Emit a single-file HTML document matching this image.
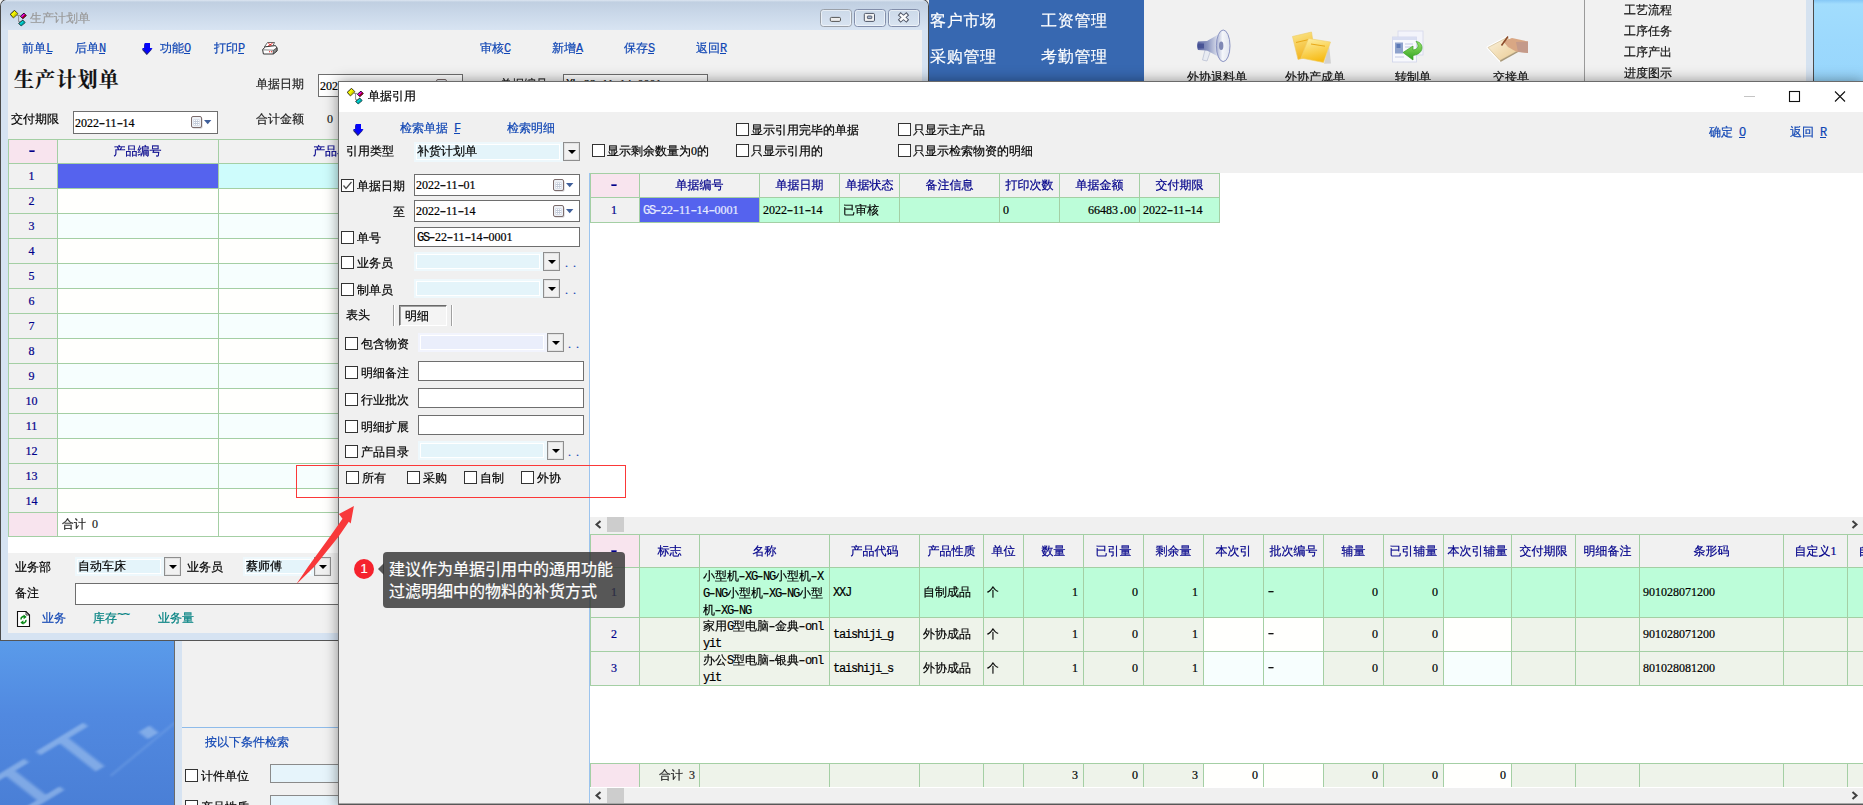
<!DOCTYPE html>
<html lang="zh-CN"><head><meta charset="utf-8"><title>单据引用</title>
<style>
html,body{margin:0;padding:0}
body{width:1863px;height:805px;overflow:hidden;position:relative;background:#f0f0f0;font-family:'Liberation Serif','WenQuanYi Zen Hei','Noto Sans CJK SC',sans-serif;font-size:12px;color:#000}
div,svg.a,i{position:absolute;box-sizing:content-box}
.t{white-space:nowrap;-webkit-text-stroke:0.2px}
.dash{font-weight:bold}
.m{font-family:'Liberation Mono',monospace;letter-spacing:-1.2px}
.d{font-family:'Liberation Serif',serif}
.h{display:inline-block;width:6px;font-family:'Liberation Mono',monospace;transform:scaleX(1.45);text-indent:-0.6px}
.cb{width:11px;height:11px;border:1px solid #333;background:#fff}
.dd{border:1px solid #8e8e8e;background:#f1f1f1;box-shadow:inset 0 0 0 1px #e2e2e2}
.dd i{width:0;height:0;border-left:4px solid transparent;border-right:4px solid transparent;border-top:4px solid #000}
u{text-decoration:underline}
.g{background:#a4cfa4}
</style></head><body>
<div style="left:929px;top:0px;width:215px;height:82px;background:#3768b1"></div>
<div class="t" style="left:930px;top:11px;line-height:20px;height:20px;font-size:16px;color:#fff;letter-spacing:0.7px;">客户市场</div>
<div class="t" style="left:1041px;top:11px;line-height:20px;height:20px;font-size:16px;color:#fff;letter-spacing:0.7px;">工资管理</div>
<div class="t" style="left:930px;top:47px;line-height:20px;height:20px;font-size:16px;color:#fff;letter-spacing:0.7px;">采购管理</div>
<div class="t" style="left:1041px;top:47px;line-height:20px;height:20px;font-size:16px;color:#fff;letter-spacing:0.7px;">考勤管理</div>
<div style="left:1144px;top:0px;width:440px;height:82px;background:#f1f1f1"></div>
<svg class="a" style="left:1190px;top:26px" width="350" height="40" viewBox="1190 26 350 40">
<defs>
<linearGradient id="gh" x1="0" x2="1"><stop offset="0" stop-color="#aab2d2"/><stop offset=".45" stop-color="#f4f6fa"/><stop offset="1" stop-color="#dfe3ee"/></linearGradient>
<linearGradient id="gb" x1="0" x2="1"><stop offset="0" stop-color="#5a64a2"/><stop offset=".5" stop-color="#8e98c2"/><stop offset="1" stop-color="#e6e9f2"/></linearGradient>
<linearGradient id="gy" x1="0" y1="0" x2="0.3" y2="1"><stop offset="0" stop-color="#fdf2ac"/><stop offset="1" stop-color="#f7bc18"/></linearGradient>
<linearGradient id="gy2" x1="0" y1="0" x2="0.3" y2="1"><stop offset="0" stop-color="#fbe88e"/><stop offset="1" stop-color="#f3b420"/></linearGradient>
<linearGradient id="gp" x1="0" y1="0" x2="1" y2="1"><stop offset="0" stop-color="#fbf3de"/><stop offset="1" stop-color="#e9c88e"/></linearGradient>
<linearGradient id="gg" x1="0" y1="0" x2="0" y2="1"><stop offset="0" stop-color="#9be36c"/><stop offset="1" stop-color="#2fa21e"/></linearGradient>
</defs>
<!-- megaphone -->
<path d="M1205 50 L1202.5 60 L1207 61 L1210.5 51 Z" fill="#e8ebf2" stroke="#b4bbd0" stroke-width=".7"/>
<path d="M1198 41.5 L1207 41 L1219 34 L1219 57 L1207 50.5 L1198 50 Q1196 46 1198 41.5Z" fill="url(#gb)"/>
<rect x="1198" y="43.5" width="6" height="5" fill="#3e4a8e" opacity=".8"/>
<ellipse cx="1223.2" cy="45.8" rx="6.8" ry="15.8" fill="url(#gh)" stroke="#8a93c2" stroke-width="1"/>
<ellipse cx="1221.2" cy="45.8" rx="2.2" ry="4.2" fill="#7f88b4"/>
<!-- sticky notes -->
<path d="M1292.5 36.5 L1311.5 32 L1315 55 L1298 59.5 Z" fill="url(#gy2)" stroke="#eecb62" stroke-width=".6"/>
<path d="M1296 42.5 L1309 39.5" stroke="#e8a818" stroke-width="1"/>
<path d="M1331 63.5 L1324 63.8 L1329 45 Z" fill="#b8b8b8" opacity=".55"/>
<path d="M1308.5 38.5 L1330.5 42 L1323.5 62.5 L1301 58 Z" fill="url(#gy)" stroke="#f0cf6a" stroke-width=".6"/>
<path d="M1311 44 L1325 46.2" stroke="#e8a818" stroke-width="1"/>
<!-- windows + green arrow -->
<rect x="1398" y="31" width="25" height="24" fill="#f3f4fb" stroke="#d4d8ec" stroke-width=".8"/>
<rect x="1392.5" y="37" width="24" height="25" fill="#f8f9fd" stroke="#cfd4ea" stroke-width=".8"/>
<rect x="1392.5" y="37" width="24" height="3" fill="#d9def2"/>
<rect x="1395" y="42.5" width="8" height="11" fill="#8ea2cc"/>
<rect x="1396.5" y="44" width="4" height="4" fill="#5a78b6"/>
<path d="M1405 44h8M1405 47h7M1395 57h9" stroke="#c2c9e4" stroke-width="1"/>
<path d="M1416 41.5 C1424 42 1425 54 1413 55.5 L1413 60 L1403 52.5 L1413 46 L1413 50 C1419 49.5 1419 44.5 1416 41.5 Z" fill="url(#gg)" stroke="#3aa026" stroke-width=".7"/>
<!-- paper + hand -->
<path d="M1488 47.5 L1507 37.5 L1521 49 L1500 60.5 Z" fill="#fff" stroke="#fff" stroke-width="3" stroke-linejoin="round"/>
<path d="M1488 47.5 L1507 37.5 L1521 49 L1500 60.5 Z" fill="url(#gp)" stroke="#c9b488" stroke-width=".6"/>
<path d="M1500 60.5 L1521 49 L1521 50.5 L1500.5 62 Z" fill="#a89878"/>
<path d="M1503 41 L1512 38 L1528 41.5 L1528 53 L1516 51.5 L1508 47 Z" fill="#d9a784"/>
<path d="M1516 42 L1528 41.5 L1528 53 L1518 52 Z" fill="#c49a8a"/>
<path d="M1508 36.5 L1501.5 45.5" stroke="#8a4a2a" stroke-width="1.6"/>
</svg>
<div class="t" style="left:1167px;top:69px;line-height:16px;height:16px;font-size:12px;color:#111;width:100px;text-align:center;">外协退料单</div>
<div class="t" style="left:1265px;top:69px;line-height:16px;height:16px;font-size:12px;color:#111;width:100px;text-align:center;">外协产成单</div>
<div class="t" style="left:1363px;top:69px;line-height:16px;height:16px;font-size:12px;color:#111;width:100px;text-align:center;">转制单</div>
<div class="t" style="left:1461px;top:69px;line-height:16px;height:16px;font-size:12px;color:#111;width:100px;text-align:center;">交接单</div>
<div style="left:1584px;top:0px;width:1px;height:82px;background:#9a9a9a"></div>
<div style="left:1585px;top:0px;width:221px;height:82px;background:#f1f1f1"></div>
<div class="t" style="left:1624px;top:2px;line-height:16px;height:16px;font-size:12px;color:#111;">工艺流程</div>
<div class="t" style="left:1624px;top:23px;line-height:16px;height:16px;font-size:12px;color:#111;">工序任务</div>
<div class="t" style="left:1624px;top:44px;line-height:16px;height:16px;font-size:12px;color:#111;">工序产出</div>
<div class="t" style="left:1624px;top:65px;line-height:16px;height:16px;font-size:12px;color:#111;">进度图示</div>
<div style="left:1806px;top:0px;width:7px;height:82px;background:#d5e2f0"></div>
<div style="left:1813px;top:0px;width:50px;height:82px;background:linear-gradient(180deg,#86c8f6 0,#a2ddfd 5%,#9cd9fd 50%,#98d6fc 100%);border-left:1px solid #4c4c4c"></div>
<div style="left:0px;top:641px;width:174px;height:164px;background:linear-gradient(180deg,#5a9bea 0%,#5189e0 45%,#4a7fd6 100%);overflow:hidden"><div class="t" style="left:0;top:0;font:66px/1 'Liberation Mono',monospace;color:rgba(175,205,242,.52);transform:matrix(1.353,-0.824,0.925,0.725,-27.1,140.1);transform-origin:0 0;filter:blur(1.1px)">IT.</div><div style="left:110px;top:134px;width:84px;height:2px;background:rgba(150,190,240,.3);transform:rotate(-39.6deg);transform-origin:0 0;filter:blur(0.8px)"></div></div>
<div style="left:174px;top:641px;width:8px;height:164px;background:#d6e3f2;border-left:1px solid #6a6a6a;width:7px"></div>
<div style="left:182px;top:641px;width:157px;height:164px;background:#f1f1f1"></div>
<div style="left:182px;top:727px;width:157px;height:1px;background:#8ebbea"></div>
<div class="t" style="left:205px;top:734px;line-height:16px;height:16px;font-size:12px;color:#1046b4;">按以下条件检索</div>
<div class="cb" style="left:185px;top:769px"></div>
<div class="t" style="left:201px;top:768px;line-height:16px;height:16px;font-size:12px;color:#000;">计件单位</div>
<div style="left:270px;top:764px;width:80px;height:17px;background:#e6f4fb;border:1px solid #8a8a8a"></div>
<div class="cb" style="left:185px;top:800px"></div>
<div class="t" style="left:201px;top:799px;line-height:16px;height:16px;font-size:12px;color:#000;">产品性质</div>
<div style="left:270px;top:795px;width:80px;height:17px;background:#e6f4fb;border:1px solid #8a8a8a"></div>
<div style="left:0px;top:-1px;width:929px;height:642px;background:#d6e3f2;border-radius:7px 7px 0 0;box-shadow:inset 0 0 0 1px #4a4a4a"></div>
<div style="left:1px;top:0px;width:927px;height:30px;background:linear-gradient(180deg,#dde6f1 0,#c0cfe1 7%,#cbd9ea 50%,#d8e4f2 100%);border-radius:6px 6px 0 0"></div>
<svg class="a" style="left:10px;top:10px" width="17" height="17" viewBox="0 0 17 17">
<path d="M7 5.4H10.4M8.6 5.4V11.7H10.2" stroke="#8c8c8c" stroke-width="1" fill="none"/>
<path d="M4.5 0.3 L7.9 3.7 L3.4 7.9 L0.2 4.3 Z" fill="#f6f600" stroke="#111" stroke-width="0.9"/>
<path d="M6.2 2 L7.9 3.7 L3.4 7.9 L2.4 6.8 Z" fill="#b8b800" opacity=".55"/>
<path d="M14 3.1 L16.3 5.6 L12.8 8.7 L10.4 6.2 Z" fill="#f000f0" stroke="#111" stroke-width="0.9"/>
<path d="M15.1 4.3 L16.3 5.6 L12.8 8.7 L11.9 7.6 Z" fill="#90001c"/>
<path d="M12.8 10.1 L15.1 12.6 L11.2 15.9 L8.7 13.4 Z" fill="#00dcdc" stroke="#111" stroke-width="0.9"/>
<path d="M13.9 11.3 L15.1 12.6 L11.2 15.9 L10.2 14.9 Z" fill="#009a9a" opacity=".8"/></svg>
<div class="t" style="left:30px;top:10px;line-height:16px;height:16px;font-size:12px;color:#9a9a9a;">生产计划单</div>
<svg class="a" style="left:820px;top:9px" width="32" height="19" viewBox="0 0 32 19"><rect x="0.5" y="0.5" width="31" height="17" rx="3" fill="rgba(255,255,255,.10)" stroke="#9aa0a8"/><rect x="1.5" y="1.5" width="29" height="15" rx="2" fill="none" stroke="rgba(255,255,255,.55)"/><rect x="10.3" y="8.4" width="10.2" height="4" rx="1.2" fill="#ececec" stroke="#555" stroke-width="1"/></svg>
<svg class="a" style="left:854px;top:9px" width="32" height="19" viewBox="0 0 32 19"><rect x="0.5" y="0.5" width="31" height="17" rx="3" fill="rgba(255,255,255,.10)" stroke="#828eaa"/><rect x="1.5" y="1.5" width="29" height="15" rx="2" fill="none" stroke="rgba(255,255,255,.55)"/><rect x="10.3" y="4.4" width="10.2" height="8" rx="1.2" fill="#f4f4f4" stroke="#4e5566" stroke-width="1"/><rect x="13.4" y="7" width="4.4" height="2.6" rx=".6" fill="#a8b8d0" stroke="#4e5566" stroke-width=".9"/></svg>
<svg class="a" style="left:888px;top:9px" width="32" height="19" viewBox="0 0 32 19"><rect x="0.5" y="0.5" width="31" height="17" rx="3" fill="rgba(255,255,255,.10)" stroke="#828eaa"/><rect x="1.5" y="1.5" width="29" height="15" rx="2" fill="none" stroke="rgba(255,255,255,.55)"/><path d="M11.2 4.6 L19.8 12.2 M19.8 4.6 L11.2 12.2" stroke="#4e5566" stroke-width="4.2"/><path d="M12 5.3 L19 11.5 M19 5.3 L12 11.5" stroke="#fafafa" stroke-width="2.4"/></svg>
<div style="left:8px;top:30px;width:914px;height:603px;background:#f1f1f1"></div>
<div class="t" style="left:22px;top:40px;line-height:16px;height:16px;font-size:12px;color:#1046b4;">前单<u><span class="m">L</span></u></div>
<div class="t" style="left:75px;top:40px;line-height:16px;height:16px;font-size:12px;color:#1046b4;">后单<u><span class="m">N</span></u></div>
<div class="t" style="left:160px;top:40px;line-height:16px;height:16px;font-size:12px;color:#1046b4;">功能<u><span class="m">O</span></u></div>
<div class="t" style="left:214px;top:40px;line-height:16px;height:16px;font-size:12px;color:#1046b4;">打印<u><span class="m">P</span></u></div>
<div class="t" style="left:480px;top:40px;line-height:16px;height:16px;font-size:12px;color:#1046b4;">审核<u><span class="m">C</span></u></div>
<div class="t" style="left:552px;top:40px;line-height:16px;height:16px;font-size:12px;color:#1046b4;">新增<u><span class="m">A</span></u></div>
<div class="t" style="left:624px;top:40px;line-height:16px;height:16px;font-size:12px;color:#1046b4;">保存<u><span class="m">S</span></u></div>
<div class="t" style="left:696px;top:40px;line-height:16px;height:16px;font-size:12px;color:#1046b4;">返回<u><span class="m">R</span></u></div>
<svg class="a" style="left:142px;top:43px" width="11" height="12" viewBox="0 0 11 12"><path d="M2.6 0.6h5.4v5h2.6l-5.3 5.9L0 5.6h2.6z" fill="#282870" transform="translate(-0.5,0.6)"/><path d="M2.6 0h5.4v5h2.6l-5.3 5.8L0 5h2.6z" fill="#0404fa"/></svg>
<svg class="a" style="left:261px;top:41px" width="18" height="15" viewBox="261 41 18 15">
<path d="M267.5 42.5h7l-2.2 4.5h-8z" fill="#fff" stroke="#444" stroke-width=".8"/>
<path d="M268.3 43.2l3.6 3M272.6 43.2l-4.6 3" stroke="#e81818" stroke-width=".9"/>
<path d="M262.6 49.5 L265.5 46.8 L275.5 45.6 L277 48 L277 51 L273.2 54 L263.4 54 Z" fill="#fff" stroke="#222" stroke-width=".9"/>
<path d="M273.2 50.4 L277 47.6 L277 51 L273.2 54 Z" fill="#8a8a8a" stroke="#222" stroke-width=".6"/>
<path d="M262.8 49.8 L273.2 50.2" stroke="#555" stroke-width=".7"/>
<path d="M269 51.8h1.1M271 51.8h1.1" stroke="#e81818" stroke-width="1.1"/></svg>
<div class="t" style="left:14px;top:65px;font:bold 20px/30px 'Liberation Serif','Noto Serif CJK SC',serif;letter-spacing:1.2px;color:#111">生产计划单</div>
<div class="t" style="left:256px;top:76px;line-height:16px;height:16px;font-size:12px;color:#222;">单据日期</div>
<div style="left:318px;top:74px;width:143px;height:21px;background:#fff;border:1px solid #6e6e6e;"></div><div class="t" style="left:320px;top:78px;line-height:16px;height:16px;font-size:12px;color:#000;"><span class="d">2022</span><span class="h">-</span><span class="d">11</span><span class="h">-</span><span class="d">14</span></div><svg class="a" style="left:436px;top:79px" width="24" height="14" viewBox="0 0 24 14"><rect x="1.5" y="1.5" width="10" height="11" rx="1.5" fill="#c8c8cc"/><rect x="0.5" y="0.5" width="10" height="11" rx="1.5" fill="#eef1f6" stroke="#7c6c6c"/><rect x="2.5" y="3.5" width="6" height="6" fill="#c3cbd9"/><path d="M3 4.5h1.2M5 4.5h1.2M7 4.5h1.2M3 6.5h1.2M5 6.5h1.2M7 6.5h1.2M3 8.5h1.2M5 8.5h1.2M7 8.5h1.2" stroke="#fff" stroke-width="1.1"/><path d="M13 4h7.4l-3.7 4.2z" fill="#3f5f9a"/></svg>
<div class="t" style="left:500px;top:76px;line-height:16px;height:16px;font-size:12px;color:#222;">单据编号</div>
<div style="left:563px;top:74px;width:143px;height:20px;background:#fff;border:1px solid #6e6e6e"></div>
<div class="t" style="left:566px;top:76px;line-height:16px;height:16px;font-size:12px;color:#000;"><span class="m">XL</span><span class="h">-</span><span class="d">22</span><span class="h">-</span><span class="d">11</span><span class="h">-</span><span class="d">14</span><span class="h">-</span><span class="d">0001</span></div>
<div class="t" style="left:11px;top:111px;line-height:16px;height:16px;font-size:12px;color:#000;">交付期限</div>
<div style="left:73px;top:111px;width:143px;height:21px;background:#fff;border:1px solid #6e6e6e;"></div><div class="t" style="left:75px;top:115px;line-height:16px;height:16px;font-size:12px;color:#000;"><span class="d">2022</span><span class="h">-</span><span class="d">11</span><span class="h">-</span><span class="d">14</span></div><svg class="a" style="left:191px;top:116px" width="24" height="14" viewBox="0 0 24 14"><rect x="1.5" y="1.5" width="10" height="11" rx="1.5" fill="#c8c8cc"/><rect x="0.5" y="0.5" width="10" height="11" rx="1.5" fill="#eef1f6" stroke="#7c6c6c"/><rect x="2.5" y="3.5" width="6" height="6" fill="#c3cbd9"/><path d="M3 4.5h1.2M5 4.5h1.2M7 4.5h1.2M3 6.5h1.2M5 6.5h1.2M7 6.5h1.2M3 8.5h1.2M5 8.5h1.2M7 8.5h1.2" stroke="#fff" stroke-width="1.1"/><path d="M13 4h7.4l-3.7 4.2z" fill="#3f5f9a"/></svg>
<div class="t" style="left:256px;top:111px;line-height:16px;height:16px;font-size:12px;color:#222;">合计金额</div>
<div class="t" style="left:327px;top:111px;line-height:16px;height:16px;font-size:12px;color:#222;"><span class="d">0</span></div>
<div style="left:8px;top:139px;width:914px;height:414px;background:#fff"></div>
<div style="left:8px;top:139px;width:914px;height:25px;background:#f1f1f1"></div>
<div style="left:8px;top:139px;width:50px;height:25px;background:#f8e4ee"></div>
<div style="left:8px;top:164px;width:50px;height:349px;background:#f1f1f1"></div>
<div style="left:8px;top:512px;width:50px;height:25px;background:#f8e4ee"></div>
<div style="left:58px;top:164px;width:864px;height:24px;background:#f6fefe"></div>
<div style="left:58px;top:189px;width:864px;height:24px;background:#fffffd"></div>
<div style="left:58px;top:214px;width:864px;height:24px;background:#f6fefe"></div>
<div style="left:58px;top:239px;width:864px;height:24px;background:#fffffd"></div>
<div style="left:58px;top:264px;width:864px;height:24px;background:#f6fefe"></div>
<div style="left:58px;top:289px;width:864px;height:24px;background:#fffffd"></div>
<div style="left:58px;top:314px;width:864px;height:24px;background:#f6fefe"></div>
<div style="left:58px;top:339px;width:864px;height:24px;background:#fffffd"></div>
<div style="left:58px;top:364px;width:864px;height:24px;background:#f6fefe"></div>
<div style="left:58px;top:389px;width:864px;height:24px;background:#fffffd"></div>
<div style="left:58px;top:414px;width:864px;height:24px;background:#f6fefe"></div>
<div style="left:58px;top:439px;width:864px;height:24px;background:#fffffd"></div>
<div style="left:58px;top:464px;width:864px;height:24px;background:#f6fefe"></div>
<div style="left:58px;top:489px;width:864px;height:24px;background:#fffffd"></div>
<div style="left:58px;top:164px;width:864px;height:24px;background:#cefcfc"></div>
<div style="left:58px;top:164px;width:160px;height:24px;background:#5563ee"></div>
<div class="t" style="left:7px;top:168px;line-height:16px;height:16px;font-size:12px;color:#00008a;width:49px;text-align:center;"><span class="d">1</span></div>
<div class="t" style="left:7px;top:193px;line-height:16px;height:16px;font-size:12px;color:#00008a;width:49px;text-align:center;"><span class="d">2</span></div>
<div class="t" style="left:7px;top:218px;line-height:16px;height:16px;font-size:12px;color:#00008a;width:49px;text-align:center;"><span class="d">3</span></div>
<div class="t" style="left:7px;top:243px;line-height:16px;height:16px;font-size:12px;color:#00008a;width:49px;text-align:center;"><span class="d">4</span></div>
<div class="t" style="left:7px;top:268px;line-height:16px;height:16px;font-size:12px;color:#00008a;width:49px;text-align:center;"><span class="d">5</span></div>
<div class="t" style="left:7px;top:293px;line-height:16px;height:16px;font-size:12px;color:#00008a;width:49px;text-align:center;"><span class="d">6</span></div>
<div class="t" style="left:7px;top:318px;line-height:16px;height:16px;font-size:12px;color:#00008a;width:49px;text-align:center;"><span class="d">7</span></div>
<div class="t" style="left:7px;top:343px;line-height:16px;height:16px;font-size:12px;color:#00008a;width:49px;text-align:center;"><span class="d">8</span></div>
<div class="t" style="left:7px;top:368px;line-height:16px;height:16px;font-size:12px;color:#00008a;width:49px;text-align:center;"><span class="d">9</span></div>
<div class="t" style="left:7px;top:393px;line-height:16px;height:16px;font-size:12px;color:#00008a;width:49px;text-align:center;"><span class="d">10</span></div>
<div class="t" style="left:7px;top:418px;line-height:16px;height:16px;font-size:12px;color:#00008a;width:49px;text-align:center;"><span class="d">11</span></div>
<div class="t" style="left:7px;top:443px;line-height:16px;height:16px;font-size:12px;color:#00008a;width:49px;text-align:center;"><span class="d">12</span></div>
<div class="t" style="left:7px;top:468px;line-height:16px;height:16px;font-size:12px;color:#00008a;width:49px;text-align:center;"><span class="d">13</span></div>
<div class="t" style="left:7px;top:493px;line-height:16px;height:16px;font-size:12px;color:#00008a;width:49px;text-align:center;"><span class="d">14</span></div>
<div class="g" style="left:8px;top:139px;width:914px;height:1px;"></div>
<div class="g" style="left:8px;top:163px;width:914px;height:1px;"></div>
<div class="g" style="left:8px;top:188px;width:914px;height:1px;"></div>
<div class="g" style="left:8px;top:213px;width:914px;height:1px;"></div>
<div class="g" style="left:8px;top:238px;width:914px;height:1px;"></div>
<div class="g" style="left:8px;top:263px;width:914px;height:1px;"></div>
<div class="g" style="left:8px;top:288px;width:914px;height:1px;"></div>
<div class="g" style="left:8px;top:313px;width:914px;height:1px;"></div>
<div class="g" style="left:8px;top:338px;width:914px;height:1px;"></div>
<div class="g" style="left:8px;top:363px;width:914px;height:1px;"></div>
<div class="g" style="left:8px;top:388px;width:914px;height:1px;"></div>
<div class="g" style="left:8px;top:413px;width:914px;height:1px;"></div>
<div class="g" style="left:8px;top:438px;width:914px;height:1px;"></div>
<div class="g" style="left:8px;top:463px;width:914px;height:1px;"></div>
<div class="g" style="left:8px;top:488px;width:914px;height:1px;"></div>
<div class="g" style="left:8px;top:512px;width:914px;height:1px;"></div>
<div class="g" style="left:8px;top:536px;width:914px;height:1px;"></div>
<div class="g" style="left:8px;top:139px;width:1px;height:398px;"></div>
<div class="g" style="left:57px;top:139px;width:1px;height:398px;"></div>
<div class="g" style="left:218px;top:139px;width:1px;height:398px;"></div>
<div class="t" style="left:7px;top:143px;line-height:16px;height:16px;font-size:12px;color:#00008a;width:49px;text-align:center;"><span class="dash"><span class="h">-</span></span></div>
<div class="t" style="left:57px;top:143px;line-height:16px;height:16px;font-size:12px;color:#00008a;width:161px;text-align:center;">产品编号</div>
<div class="t" style="left:313px;top:143px;line-height:16px;height:16px;font-size:12px;color:#00008a;">产品名称</div>
<div class="t" style="left:62px;top:516px;line-height:16px;height:16px;font-size:12px;color:#222;">合计<span class="m"> </span><span class="d">0</span></div>
<div class="t" style="left:15px;top:559px;line-height:16px;height:16px;font-size:12px;color:#000;">业务部</div>
<div style="left:75px;top:557px;width:89px;height:19px;background:#eef8fc"></div><div style="left:77px;top:559px;width:84px;height:15px;background:#fff"></div><div style="left:78px;top:560px;width:82px;height:13px;background:#e4f4fa"></div><div class="t" style="left:78px;top:558px;line-height:16px;height:16px;font-size:12px;color:#000;">自动车床</div>
<div class="dd" style="left:164px;top:557px;width:15px;height:17px"><i style="left:4px;top:7px"></i></div>
<div class="t" style="left:187px;top:559px;line-height:16px;height:16px;font-size:12px;color:#000;">业务员</div>
<div style="left:243px;top:557px;width:71px;height:19px;background:#eef8fc"></div><div style="left:245px;top:559px;width:66px;height:15px;background:#fff"></div><div style="left:246px;top:560px;width:64px;height:13px;background:#e4f4fa"></div><div class="t" style="left:246px;top:558px;line-height:16px;height:16px;font-size:12px;color:#000;">蔡师傅</div>
<div class="dd" style="left:314px;top:557px;width:15px;height:17px"><i style="left:4px;top:7px"></i></div>
<div class="t" style="left:15px;top:585px;line-height:16px;height:16px;font-size:12px;color:#000;">备注</div>
<div style="left:75px;top:583px;width:600px;height:20px;background:#fff;border:1px solid #6e6e6e"></div>
<svg class="a" style="left:16px;top:610px" width="16" height="18" viewBox="16 610 16 18">
<path d="M17.5 611.5h8.5l3.5 3.5v11.5h-12z" fill="#fff" stroke="#111" stroke-width="1.1"/>
<path d="M26 611.5v3.5h3.5" fill="none" stroke="#111" stroke-width=".8"/>
<path d="M21 619.5 A2.8 2.8 0 0 1 25.5 617" fill="none" stroke="#0a8a18" stroke-width="1.5"/>
<path d="M23.6 614.6 L26.6 617 L23.6 619.2 Z" fill="#0a8a18"/>
<path d="M26 619.8 A2.8 2.8 0 0 1 21.5 622.3" fill="none" stroke="#0a8a18" stroke-width="1.5"/>
<path d="M23.4 620.2 L20.4 622.4 L23.4 624.8 Z" fill="#0a8a18"/></svg>
<div class="t" style="left:42px;top:610px;line-height:16px;height:16px;font-size:12px;color:#1046b4;">业务</div>
<div class="t" style="left:93px;top:610px;line-height:16px;height:16px;font-size:12px;color:#008080;">库存<span class="m" style="position:relative;top:-4px">~~</span></div>
<div class="t" style="left:158px;top:610px;line-height:16px;height:16px;font-size:12px;color:#008080;">业务量</div>
<div style="left:0px;top:640px;width:929px;height:1px;background:#555"></div>
<div style="left:339px;top:82px;width:1524px;height:723px;box-shadow:0 0 13px 1px rgba(0,0,0,.42);background:#f0f0f0"></div>
<div style="left:338px;top:81px;width:1526px;height:723px;border:1px solid #6b6b6b;border-right:none;background:#f0f0f0;width:1525px"></div>
<div style="left:339px;top:82px;width:1524px;height:30px;background:#fff"></div>
<svg class="a" style="left:347px;top:88px" width="17" height="17" viewBox="0 0 17 17">
<path d="M7 5.4H10.4M8.6 5.4V11.7H10.2" stroke="#8c8c8c" stroke-width="1" fill="none"/>
<path d="M4.5 0.3 L7.9 3.7 L3.4 7.9 L0.2 4.3 Z" fill="#f6f600" stroke="#111" stroke-width="0.9"/>
<path d="M6.2 2 L7.9 3.7 L3.4 7.9 L2.4 6.8 Z" fill="#b8b800" opacity=".55"/>
<path d="M14 3.1 L16.3 5.6 L12.8 8.7 L10.4 6.2 Z" fill="#f000f0" stroke="#111" stroke-width="0.9"/>
<path d="M15.1 4.3 L16.3 5.6 L12.8 8.7 L11.9 7.6 Z" fill="#90001c"/>
<path d="M12.8 10.1 L15.1 12.6 L11.2 15.9 L8.7 13.4 Z" fill="#00dcdc" stroke="#111" stroke-width="0.9"/>
<path d="M13.9 11.3 L15.1 12.6 L11.2 15.9 L10.2 14.9 Z" fill="#009a9a" opacity=".8"/></svg>
<div class="t" style="left:368px;top:88px;line-height:16px;height:16px;font-size:12px;color:#000;">单据引用</div>
<svg class="a" style="left:1740px;top:86px" width="110" height="20" viewBox="0 0 110 20"><path d="M4 10.5h11" stroke="#c4c4c4"/><rect x="49.5" y="5.5" width="10" height="10" fill="none" stroke="#111" stroke-width="1.1"/><path d="M95 5.5l10 10M105 5.5l-10 10" stroke="#111" stroke-width="1.1"/></svg>
<svg class="a" style="left:353px;top:124px" width="11" height="12" viewBox="0 0 11 12"><path d="M2.6 0.6h5.4v5h2.6l-5.3 5.9L0 5.6h2.6z" fill="#282870" transform="translate(-0.5,0.6)"/><path d="M2.6 0h5.4v5h2.6l-5.3 5.8L0 5h2.6z" fill="#0404fa"/></svg>
<div class="t" style="left:400px;top:120px;line-height:16px;height:16px;font-size:12px;color:#1046b4;">检索单据<span class="m"> </span><u><span class="m">F</span></u></div>
<div class="t" style="left:507px;top:120px;line-height:16px;height:16px;font-size:12px;color:#1046b4;">检索明细</div>
<div class="t" style="left:1709px;top:124px;line-height:16px;height:16px;font-size:12px;color:#1046b4;">确定<span class="m"> </span><u><span class="m">O</span></u></div>
<div class="t" style="left:1790px;top:124px;line-height:16px;height:16px;font-size:12px;color:#1046b4;">返回<span class="m"> </span><u><span class="m">R</span></u></div>
<div class="cb" style="left:592px;top:144px"></div>
<div class="t" style="left:607px;top:143px;line-height:16px;height:16px;font-size:12px;color:#000;">显示剩余数量为<span class="d">0</span>的</div>
<div class="cb" style="left:736px;top:123px"></div>
<div class="t" style="left:751px;top:122px;line-height:16px;height:16px;font-size:12px;color:#000;">显示引用完毕的单据</div>
<div class="cb" style="left:736px;top:144px"></div>
<div class="t" style="left:751px;top:143px;line-height:16px;height:16px;font-size:12px;color:#000;">只显示引用的</div>
<div class="cb" style="left:898px;top:123px"></div>
<div class="t" style="left:913px;top:122px;line-height:16px;height:16px;font-size:12px;color:#000;">只显示主产品</div>
<div class="cb" style="left:898px;top:144px"></div>
<div class="t" style="left:913px;top:143px;line-height:16px;height:16px;font-size:12px;color:#000;">只显示检索物资的明细</div>
<div class="t" style="left:346px;top:143px;line-height:16px;height:16px;font-size:12px;color:#000;">引用类型</div>
<div style="left:414px;top:142px;width:149px;height:20px;background:#eef8fc"></div><div style="left:416px;top:144px;width:144px;height:16px;background:#fff"></div><div style="left:417px;top:145px;width:142px;height:14px;background:#e4f4fa"></div><div class="t" style="left:417px;top:143px;line-height:16px;height:16px;font-size:12px;color:#000;">补货计划单</div>
<div class="dd" style="left:563px;top:142px;width:15px;height:17px"><i style="left:4px;top:7px"></i></div>
<div class="cb" style="left:341px;top:179px"><svg width="13" height="13" viewBox="0 0 13 13" style="position:absolute;left:-1px;top:-1px"><path d="M2.5 6.5 L5 9.5 L10.5 3" fill="none" stroke="#4a4a4a" stroke-width="1.2"/></svg></div>
<div class="t" style="left:357px;top:178px;line-height:16px;height:16px;font-size:12px;color:#000;">单据日期</div>
<div style="left:414px;top:174px;width:164px;height:20px;background:#fff;border:1px solid #6e6e6e;"></div><div class="t" style="left:416px;top:177px;line-height:16px;height:16px;font-size:12px;color:#000;"><span class="d">2022</span><span class="h">-</span><span class="d">11</span><span class="h">-</span><span class="d">01</span></div><svg class="a" style="left:553px;top:179px" width="24" height="14" viewBox="0 0 24 14"><rect x="1.5" y="1.5" width="10" height="11" rx="1.5" fill="#c8c8cc"/><rect x="0.5" y="0.5" width="10" height="11" rx="1.5" fill="#eef1f6" stroke="#7c6c6c"/><rect x="2.5" y="3.5" width="6" height="6" fill="#c3cbd9"/><path d="M3 4.5h1.2M5 4.5h1.2M7 4.5h1.2M3 6.5h1.2M5 6.5h1.2M7 6.5h1.2M3 8.5h1.2M5 8.5h1.2M7 8.5h1.2" stroke="#fff" stroke-width="1.1"/><path d="M13 4h7.4l-3.7 4.2z" fill="#3f5f9a"/></svg>
<div class="t" style="left:393px;top:204px;line-height:16px;height:16px;font-size:12px;color:#000;">至</div>
<div style="left:414px;top:200px;width:164px;height:20px;background:#fff;border:1px solid #6e6e6e;"></div><div class="t" style="left:416px;top:203px;line-height:16px;height:16px;font-size:12px;color:#000;"><span class="d">2022</span><span class="h">-</span><span class="d">11</span><span class="h">-</span><span class="d">14</span></div><svg class="a" style="left:553px;top:205px" width="24" height="14" viewBox="0 0 24 14"><rect x="1.5" y="1.5" width="10" height="11" rx="1.5" fill="#c8c8cc"/><rect x="0.5" y="0.5" width="10" height="11" rx="1.5" fill="#eef1f6" stroke="#7c6c6c"/><rect x="2.5" y="3.5" width="6" height="6" fill="#c3cbd9"/><path d="M3 4.5h1.2M5 4.5h1.2M7 4.5h1.2M3 6.5h1.2M5 6.5h1.2M7 6.5h1.2M3 8.5h1.2M5 8.5h1.2M7 8.5h1.2" stroke="#fff" stroke-width="1.1"/><path d="M13 4h7.4l-3.7 4.2z" fill="#3f5f9a"/></svg>
<div class="cb" style="left:341px;top:231px"></div>
<div class="t" style="left:357px;top:230px;line-height:16px;height:16px;font-size:12px;color:#000;">单号</div>
<div style="left:414px;top:227px;width:164px;height:18px;background:#fff;border:1px solid #6e6e6e"></div>
<div class="t" style="left:417px;top:229px;line-height:16px;height:16px;font-size:12px;color:#000;"><span class="m">GS</span><span class="h">-</span><span class="d">22</span><span class="h">-</span><span class="d">11</span><span class="h">-</span><span class="d">14</span><span class="h">-</span><span class="d">0001</span></div>
<div class="cb" style="left:341px;top:256px"></div>
<div class="t" style="left:357px;top:255px;line-height:16px;height:16px;font-size:12px;color:#000;">业务员</div>
<div style="left:414px;top:252px;width:129px;height:19px;background:#eef8fc"></div><div style="left:416px;top:254px;width:124px;height:15px;background:#fff"></div><div style="left:417px;top:255px;width:122px;height:13px;background:#e4f4fa"></div>
<div class="dd" style="left:543px;top:252px;width:15px;height:17px"><i style="left:4px;top:7px"></i></div>
<div class="t" style="left:565px;top:255px;line-height:16px;height:16px;font-size:12px;color:#1046b4;letter-spacing:1px;">. .</div>
<div class="cb" style="left:341px;top:283px"></div>
<div class="t" style="left:357px;top:282px;line-height:16px;height:16px;font-size:12px;color:#000;">制单员</div>
<div style="left:414px;top:279px;width:129px;height:19px;background:#eef8fc"></div><div style="left:416px;top:281px;width:124px;height:15px;background:#fff"></div><div style="left:417px;top:282px;width:122px;height:13px;background:#e4f4fa"></div>
<div class="dd" style="left:543px;top:279px;width:15px;height:17px"><i style="left:4px;top:7px"></i></div>
<div class="t" style="left:565px;top:282px;line-height:16px;height:16px;font-size:12px;color:#1046b4;letter-spacing:1px;">. .</div>
<div class="t" style="left:346px;top:307px;line-height:16px;height:16px;font-size:12px;color:#000;">表头</div>
<div style="left:393px;top:305px;width:1px;height:21px;background:#a0a0a0;box-shadow:1px 0 0 #fff"></div>
<div style="left:399px;top:305px;width:46px;height:19px;border:1px solid;border-color:#696969 #fff #fff #696969;background:#f4f4f4;box-shadow:inset 1px 1px 0 #a0a0a0"></div>
<div class="t" style="left:405px;top:308px;line-height:16px;height:16px;font-size:12px;color:#000;">明细</div>
<div style="left:451px;top:305px;width:1px;height:21px;background:#a0a0a0;box-shadow:1px 0 0 #fff"></div>
<div class="cb" style="left:345px;top:337px"></div>
<div class="t" style="left:361px;top:336px;line-height:16px;height:16px;font-size:12px;color:#000;">包含物资</div>
<div style="left:418px;top:333px;width:129px;height:19px;background:#f2f4fd"></div><div style="left:420px;top:335px;width:124px;height:15px;background:#fff"></div><div style="left:421px;top:336px;width:122px;height:13px;background:#eaeefb"></div>
<div class="dd" style="left:547px;top:333px;width:15px;height:17px"><i style="left:4px;top:7px"></i></div>
<div class="t" style="left:568px;top:336px;line-height:16px;height:16px;font-size:12px;color:#1046b4;letter-spacing:1px;">. .</div>
<div class="cb" style="left:345px;top:366px"></div>
<div class="t" style="left:361px;top:365px;line-height:16px;height:16px;font-size:12px;color:#000;">明细备注</div>
<div style="left:418px;top:361px;width:164px;height:18px;background:#fff;border:1px solid #6e6e6e"></div>
<div class="cb" style="left:345px;top:393px"></div>
<div class="t" style="left:361px;top:392px;line-height:16px;height:16px;font-size:12px;color:#000;">行业批次</div>
<div style="left:418px;top:388px;width:164px;height:18px;background:#fff;border:1px solid #6e6e6e"></div>
<div class="cb" style="left:345px;top:420px"></div>
<div class="t" style="left:361px;top:419px;line-height:16px;height:16px;font-size:12px;color:#000;">明细扩展</div>
<div style="left:418px;top:415px;width:164px;height:18px;background:#fff;border:1px solid #6e6e6e"></div>
<div class="cb" style="left:345px;top:445px"></div>
<div class="t" style="left:361px;top:444px;line-height:16px;height:16px;font-size:12px;color:#000;">产品目录</div>
<div style="left:418px;top:441px;width:129px;height:19px;background:#eef8fc"></div><div style="left:420px;top:443px;width:124px;height:15px;background:#fff"></div><div style="left:421px;top:444px;width:122px;height:13px;background:#e4f4fa"></div>
<div class="dd" style="left:547px;top:441px;width:15px;height:17px"><i style="left:4px;top:7px"></i></div>
<div class="t" style="left:568px;top:444px;line-height:16px;height:16px;font-size:12px;color:#1046b4;letter-spacing:1px;">. .</div>
<div class="cb" style="left:346px;top:471px"></div>
<div class="t" style="left:362px;top:470px;line-height:16px;height:16px;font-size:12px;color:#000;">所有</div>
<div class="cb" style="left:407px;top:471px"></div>
<div class="t" style="left:423px;top:470px;line-height:16px;height:16px;font-size:12px;color:#000;">采购</div>
<div class="cb" style="left:464px;top:471px"></div>
<div class="t" style="left:480px;top:470px;line-height:16px;height:16px;font-size:12px;color:#000;">自制</div>
<div class="cb" style="left:521px;top:471px"></div>
<div class="t" style="left:537px;top:470px;line-height:16px;height:16px;font-size:12px;color:#000;">外协</div>
<div style="left:590px;top:173px;width:1273px;height:632px;background:#fff"></div>
<div style="left:589px;top:173px;width:1px;height:632px;background:#9cc4ee"></div>
<div style="left:590px;top:173px;width:630px;height:25px;background:#f1f1f1"></div>
<div style="left:590px;top:173px;width:49px;height:25px;background:#f8e4ee"></div>
<div style="left:590px;top:198px;width:49px;height:24px;background:#f1f1f1"></div>
<div style="left:640px;top:198px;width:580px;height:24px;background:#bcfdd9"></div>
<div style="left:640px;top:198px;width:119px;height:24px;background:#5563ee"></div>
<div class="g" style="left:590px;top:173px;width:630px;height:1px;"></div>
<div class="g" style="left:590px;top:197px;width:630px;height:1px;"></div>
<div class="g" style="left:590px;top:222px;width:630px;height:1px;"></div>
<div class="g" style="left:590px;top:173px;width:1px;height:50px;"></div>
<div class="g" style="left:639px;top:173px;width:1px;height:50px;"></div>
<div class="g" style="left:759px;top:173px;width:1px;height:50px;"></div>
<div class="g" style="left:839px;top:173px;width:1px;height:50px;"></div>
<div class="g" style="left:899px;top:173px;width:1px;height:50px;"></div>
<div class="g" style="left:999px;top:173px;width:1px;height:50px;"></div>
<div class="g" style="left:1059px;top:173px;width:1px;height:50px;"></div>
<div class="g" style="left:1139px;top:173px;width:1px;height:50px;"></div>
<div class="g" style="left:1219px;top:173px;width:1px;height:50px;"></div>
<div class="t" style="left:589px;top:177px;line-height:16px;height:16px;font-size:12px;color:#00008a;width:50px;text-align:center;"><span class="dash"><span class="h">-</span></span></div>
<div class="t" style="left:639px;top:177px;line-height:16px;height:16px;font-size:12px;color:#00008a;width:121px;text-align:center;">单据编号</div>
<div class="t" style="left:759px;top:177px;line-height:16px;height:16px;font-size:12px;color:#00008a;width:81px;text-align:center;">单据日期</div>
<div class="t" style="left:839px;top:177px;line-height:16px;height:16px;font-size:12px;color:#00008a;width:61px;text-align:center;">单据状态</div>
<div class="t" style="left:899px;top:177px;line-height:16px;height:16px;font-size:12px;color:#00008a;width:101px;text-align:center;">备注信息</div>
<div class="t" style="left:999px;top:177px;line-height:16px;height:16px;font-size:12px;color:#00008a;width:61px;text-align:center;">打印次数</div>
<div class="t" style="left:1059px;top:177px;line-height:16px;height:16px;font-size:12px;color:#00008a;width:81px;text-align:center;">单据金额</div>
<div class="t" style="left:1139px;top:177px;line-height:16px;height:16px;font-size:12px;color:#00008a;width:81px;text-align:center;">交付期限</div>
<div class="t" style="left:589px;top:202px;line-height:16px;height:16px;font-size:12px;color:#00008a;width:50px;text-align:center;"><span class="d">1</span></div>
<div class="t" style="left:643px;top:202px;line-height:16px;height:16px;font-size:12px;color:#e8ecff;"><span class="m">GS</span><span class="h">-</span><span class="d">22</span><span class="h">-</span><span class="d">11</span><span class="h">-</span><span class="d">14</span><span class="h">-</span><span class="d">0001</span></div>
<div class="t" style="left:763px;top:202px;line-height:16px;height:16px;font-size:12px;color:#000;"><span class="d">2022</span><span class="h">-</span><span class="d">11</span><span class="h">-</span><span class="d">14</span></div>
<div class="t" style="left:843px;top:202px;line-height:16px;height:16px;font-size:12px;color:#000;">已审核</div>
<div class="t" style="left:1003px;top:202px;line-height:16px;height:16px;font-size:12px;color:#000;"><span class="d">0</span></div>
<div class="t" style="left:1059px;top:202px;line-height:16px;height:16px;font-size:12px;color:#000;width:77px;text-align:right;"><span class="d">66483</span><span class="m">.</span><span class="d">00</span></div>
<div class="t" style="left:1143px;top:202px;line-height:16px;height:16px;font-size:12px;color:#000;"><span class="d">2022</span><span class="h">-</span><span class="d">11</span><span class="h">-</span><span class="d">14</span></div>
<div style="left:590px;top:517px;width:1273px;height:17px;background:#f0f0f0"></div><div style="left:607px;top:517px;width:17px;height:15px;background:#cdcdcd"></div><svg class="a" style="left:594px;top:520px" width="8" height="9" viewBox="0 0 8 9"><path d="M6.5 1L2.5 4.5l4 3.5" fill="none" stroke="#404040" stroke-width="2"/></svg><svg class="a" style="left:1851px;top:520px" width="8" height="9" viewBox="0 0 8 9"><path d="M1.5 1l4 3.5-4 3.5" fill="none" stroke="#404040" stroke-width="2"/></svg>
<div style="left:590px;top:788px;width:1273px;height:15px;background:#f0f0f0"></div><div style="left:607px;top:788px;width:17px;height:15px;background:#cdcdcd"></div><svg class="a" style="left:594px;top:791px" width="8" height="9" viewBox="0 0 8 9"><path d="M6.5 1L2.5 4.5l4 3.5" fill="none" stroke="#404040" stroke-width="2"/></svg><svg class="a" style="left:1851px;top:791px" width="8" height="9" viewBox="0 0 8 9"><path d="M1.5 1l4 3.5-4 3.5" fill="none" stroke="#404040" stroke-width="2"/></svg>
<div style="left:590px;top:534px;width:1273px;height:34px;background:#f1f1f1"></div>
<div style="left:590px;top:534px;width:49px;height:34px;background:#f8e4ee"></div>
<div style="left:590px;top:568px;width:49px;height:117px;background:#f1f1f1"></div>
<div style="left:640px;top:568px;width:1223px;height:49px;background:#bcfdd9"></div>
<div style="left:640px;top:618px;width:1223px;height:67px;background:#eef3ea"></div>
<div style="left:1204px;top:618px;width:119px;height:33px;background:#fffffd"></div>
<div style="left:1204px;top:652px;width:119px;height:33px;background:#f7fefe"></div>
<div style="left:1444px;top:618px;width:67px;height:33px;background:#fffffd"></div>
<div style="left:1444px;top:652px;width:67px;height:33px;background:#f7fefe"></div>
<div class="g" style="left:590px;top:534px;width:1273px;height:1px;"></div>
<div class="g" style="left:590px;top:567px;width:1273px;height:1px;"></div>
<div class="g" style="left:590px;top:617px;width:1273px;height:1px;"></div>
<div class="g" style="left:590px;top:651px;width:1273px;height:1px;"></div>
<div class="g" style="left:590px;top:685px;width:1273px;height:1px;"></div>
<div class="g" style="left:590px;top:534px;width:1px;height:152px;"></div>
<div class="g" style="left:639px;top:534px;width:1px;height:152px;"></div>
<div class="g" style="left:699px;top:534px;width:1px;height:152px;"></div>
<div class="g" style="left:829px;top:534px;width:1px;height:152px;"></div>
<div class="g" style="left:919px;top:534px;width:1px;height:152px;"></div>
<div class="g" style="left:983px;top:534px;width:1px;height:152px;"></div>
<div class="g" style="left:1023px;top:534px;width:1px;height:152px;"></div>
<div class="g" style="left:1083px;top:534px;width:1px;height:152px;"></div>
<div class="g" style="left:1143px;top:534px;width:1px;height:152px;"></div>
<div class="g" style="left:1203px;top:534px;width:1px;height:152px;"></div>
<div class="g" style="left:1263px;top:534px;width:1px;height:152px;"></div>
<div class="g" style="left:1323px;top:534px;width:1px;height:152px;"></div>
<div class="g" style="left:1383px;top:534px;width:1px;height:152px;"></div>
<div class="g" style="left:1443px;top:534px;width:1px;height:152px;"></div>
<div class="g" style="left:1511px;top:534px;width:1px;height:152px;"></div>
<div class="g" style="left:1575px;top:534px;width:1px;height:152px;"></div>
<div class="g" style="left:1639px;top:534px;width:1px;height:152px;"></div>
<div class="g" style="left:1783px;top:534px;width:1px;height:152px;"></div>
<div class="g" style="left:1847px;top:534px;width:1px;height:152px;"></div>
<div class="t" style="left:589px;top:543px;line-height:16px;height:16px;font-size:12px;color:#00008a;width:50px;text-align:center;"><span class="dash"><span class="h">-</span></span></div>
<div class="t" style="left:639px;top:543px;line-height:16px;height:16px;font-size:12px;color:#00008a;width:61px;text-align:center;">标志</div>
<div class="t" style="left:699px;top:543px;line-height:16px;height:16px;font-size:12px;color:#00008a;width:131px;text-align:center;">名称</div>
<div class="t" style="left:829px;top:543px;line-height:16px;height:16px;font-size:12px;color:#00008a;width:91px;text-align:center;">产品代码</div>
<div class="t" style="left:919px;top:543px;line-height:16px;height:16px;font-size:12px;color:#00008a;width:65px;text-align:center;">产品性质</div>
<div class="t" style="left:983px;top:543px;line-height:16px;height:16px;font-size:12px;color:#00008a;width:41px;text-align:center;">单位</div>
<div class="t" style="left:1023px;top:543px;line-height:16px;height:16px;font-size:12px;color:#00008a;width:61px;text-align:center;">数量</div>
<div class="t" style="left:1083px;top:543px;line-height:16px;height:16px;font-size:12px;color:#00008a;width:61px;text-align:center;">已引量</div>
<div class="t" style="left:1143px;top:543px;line-height:16px;height:16px;font-size:12px;color:#00008a;width:61px;text-align:center;">剩余量</div>
<div class="t" style="left:1203px;top:543px;line-height:16px;height:16px;font-size:12px;color:#00008a;width:61px;text-align:center;">本次引</div>
<div class="t" style="left:1263px;top:543px;line-height:16px;height:16px;font-size:12px;color:#00008a;width:61px;text-align:center;">批次编号</div>
<div class="t" style="left:1323px;top:543px;line-height:16px;height:16px;font-size:12px;color:#00008a;width:61px;text-align:center;">辅量</div>
<div class="t" style="left:1383px;top:543px;line-height:16px;height:16px;font-size:12px;color:#00008a;width:61px;text-align:center;">已引辅量</div>
<div class="t" style="left:1443px;top:543px;line-height:16px;height:16px;font-size:12px;color:#00008a;width:69px;text-align:center;">本次引辅量</div>
<div class="t" style="left:1511px;top:543px;line-height:16px;height:16px;font-size:12px;color:#00008a;width:65px;text-align:center;">交付期限</div>
<div class="t" style="left:1575px;top:543px;line-height:16px;height:16px;font-size:12px;color:#00008a;width:65px;text-align:center;">明细备注</div>
<div class="t" style="left:1639px;top:543px;line-height:16px;height:16px;font-size:12px;color:#00008a;width:145px;text-align:center;">条形码</div>
<div class="t" style="left:1783px;top:543px;line-height:16px;height:16px;font-size:12px;color:#00008a;width:65px;text-align:center;">自定义<span class="d">1</span></div>
<div class="t" style="left:1847px;top:543px;line-height:16px;height:16px;font-size:12px;color:#00008a;width:65px;text-align:center;">自定义<span class="d">2</span></div>
<div class="t" style="left:589px;top:584px;line-height:16px;height:16px;font-size:12px;color:#00008a;width:50px;text-align:center;"><span class="d">1</span></div>
<div class="t" style="left:703px;top:568px;line-height:16px">小型机<span class="h">-</span><span class="m">XG</span><span class="h">-</span><span class="m">NG</span>小型机<span class="h">-</span><span class="m">X</span><br><span class="m">G</span><span class="h">-</span><span class="m">NG</span>小型机<span class="h">-</span><span class="m">XG</span><span class="h">-</span><span class="m">NG</span>小型<br>机<span class="h">-</span><span class="m">XG</span><span class="h">-</span><span class="m">NG</span></div>
<div class="t" style="left:833px;top:584px;line-height:16px;height:16px;font-size:12px;color:#000;"><span class="m">XXJ</span></div>
<div class="t" style="left:923px;top:584px;line-height:16px;height:16px;font-size:12px;color:#000;">自制成品</div>
<div class="t" style="left:987px;top:584px;line-height:16px;height:16px;font-size:12px;color:#000;">个</div>
<div class="t" style="left:1023px;top:584px;line-height:16px;height:16px;font-size:12px;color:#000;width:55px;text-align:right;"><span class="d">1</span></div>
<div class="t" style="left:1083px;top:584px;line-height:16px;height:16px;font-size:12px;color:#000;width:55px;text-align:right;"><span class="d">0</span></div>
<div class="t" style="left:1143px;top:584px;line-height:16px;height:16px;font-size:12px;color:#000;width:55px;text-align:right;"><span class="d">1</span></div>
<div class="t" style="left:1323px;top:584px;line-height:16px;height:16px;font-size:12px;color:#000;width:55px;text-align:right;"><span class="d">0</span></div>
<div class="t" style="left:1383px;top:584px;line-height:16px;height:16px;font-size:12px;color:#000;width:55px;text-align:right;"><span class="d">0</span></div>
<div class="t" style="left:1268px;top:583px;line-height:16px;height:16px;font-size:12px;color:#000;"><span class="h">-</span></div>
<div class="t" style="left:1643px;top:584px;line-height:16px;height:16px;font-size:12px;color:#000;"><span class="d">901028071200</span></div>
<div class="t" style="left:589px;top:626px;line-height:16px;height:16px;font-size:12px;color:#00008a;width:50px;text-align:center;"><span class="d">2</span></div>
<div class="t" style="left:703px;top:618px;line-height:16px">家用<span class="m">G</span>型电脑<span class="h">-</span>金典<span class="h">-</span><span class="m">onl</span><br><span class="m">yit</span></div>
<div class="t" style="left:833px;top:626px;line-height:16px;height:16px;font-size:12px;color:#000;"><span class="m">taishiji_g</span></div>
<div class="t" style="left:923px;top:626px;line-height:16px;height:16px;font-size:12px;color:#000;">外协成品</div>
<div class="t" style="left:987px;top:626px;line-height:16px;height:16px;font-size:12px;color:#000;">个</div>
<div class="t" style="left:1023px;top:626px;line-height:16px;height:16px;font-size:12px;color:#000;width:55px;text-align:right;"><span class="d">1</span></div>
<div class="t" style="left:1083px;top:626px;line-height:16px;height:16px;font-size:12px;color:#000;width:55px;text-align:right;"><span class="d">0</span></div>
<div class="t" style="left:1143px;top:626px;line-height:16px;height:16px;font-size:12px;color:#000;width:55px;text-align:right;"><span class="d">1</span></div>
<div class="t" style="left:1323px;top:626px;line-height:16px;height:16px;font-size:12px;color:#000;width:55px;text-align:right;"><span class="d">0</span></div>
<div class="t" style="left:1383px;top:626px;line-height:16px;height:16px;font-size:12px;color:#000;width:55px;text-align:right;"><span class="d">0</span></div>
<div class="t" style="left:1268px;top:625px;line-height:16px;height:16px;font-size:12px;color:#000;"><span class="h">-</span></div>
<div class="t" style="left:1643px;top:626px;line-height:16px;height:16px;font-size:12px;color:#000;"><span class="d">901028071200</span></div>
<div class="t" style="left:589px;top:660px;line-height:16px;height:16px;font-size:12px;color:#00008a;width:50px;text-align:center;"><span class="d">3</span></div>
<div class="t" style="left:703px;top:652px;line-height:16px">办公<span class="m">S</span>型电脑<span class="h">-</span>银典<span class="h">-</span><span class="m">onl</span><br><span class="m">yit</span></div>
<div class="t" style="left:833px;top:660px;line-height:16px;height:16px;font-size:12px;color:#000;"><span class="m">taishiji_s</span></div>
<div class="t" style="left:923px;top:660px;line-height:16px;height:16px;font-size:12px;color:#000;">外协成品</div>
<div class="t" style="left:987px;top:660px;line-height:16px;height:16px;font-size:12px;color:#000;">个</div>
<div class="t" style="left:1023px;top:660px;line-height:16px;height:16px;font-size:12px;color:#000;width:55px;text-align:right;"><span class="d">1</span></div>
<div class="t" style="left:1083px;top:660px;line-height:16px;height:16px;font-size:12px;color:#000;width:55px;text-align:right;"><span class="d">0</span></div>
<div class="t" style="left:1143px;top:660px;line-height:16px;height:16px;font-size:12px;color:#000;width:55px;text-align:right;"><span class="d">1</span></div>
<div class="t" style="left:1323px;top:660px;line-height:16px;height:16px;font-size:12px;color:#000;width:55px;text-align:right;"><span class="d">0</span></div>
<div class="t" style="left:1383px;top:660px;line-height:16px;height:16px;font-size:12px;color:#000;width:55px;text-align:right;"><span class="d">0</span></div>
<div class="t" style="left:1268px;top:659px;line-height:16px;height:16px;font-size:12px;color:#000;"><span class="h">-</span></div>
<div class="t" style="left:1643px;top:660px;line-height:16px;height:16px;font-size:12px;color:#000;"><span class="d">801028081200</span></div>
<div style="left:590px;top:763px;width:1273px;height:24px;background:#eef3ea"></div>
<div style="left:590px;top:763px;width:49px;height:24px;background:#f8e4ee"></div>
<div style="left:1204px;top:764px;width:119px;height:23px;background:#fffffd"></div>
<div style="left:1444px;top:764px;width:67px;height:23px;background:#fffffd"></div>
<div class="g" style="left:590px;top:763px;width:1273px;height:1px;"></div>
<div class="g" style="left:590px;top:763px;width:1px;height:24px;"></div>
<div class="g" style="left:639px;top:763px;width:1px;height:24px;"></div>
<div class="g" style="left:699px;top:763px;width:1px;height:24px;"></div>
<div class="g" style="left:829px;top:763px;width:1px;height:24px;"></div>
<div class="g" style="left:919px;top:763px;width:1px;height:24px;"></div>
<div class="g" style="left:983px;top:763px;width:1px;height:24px;"></div>
<div class="g" style="left:1023px;top:763px;width:1px;height:24px;"></div>
<div class="g" style="left:1083px;top:763px;width:1px;height:24px;"></div>
<div class="g" style="left:1143px;top:763px;width:1px;height:24px;"></div>
<div class="g" style="left:1203px;top:763px;width:1px;height:24px;"></div>
<div class="g" style="left:1263px;top:763px;width:1px;height:24px;"></div>
<div class="g" style="left:1323px;top:763px;width:1px;height:24px;"></div>
<div class="g" style="left:1383px;top:763px;width:1px;height:24px;"></div>
<div class="g" style="left:1443px;top:763px;width:1px;height:24px;"></div>
<div class="g" style="left:1511px;top:763px;width:1px;height:24px;"></div>
<div class="g" style="left:1575px;top:763px;width:1px;height:24px;"></div>
<div class="g" style="left:1639px;top:763px;width:1px;height:24px;"></div>
<div class="g" style="left:1783px;top:763px;width:1px;height:24px;"></div>
<div class="g" style="left:1847px;top:763px;width:1px;height:24px;"></div>
<div class="t" style="left:639px;top:767px;line-height:16px;height:16px;font-size:12px;color:#222;width:56px;text-align:right;">合计<span class="m"> </span><span class="d">3</span></div>
<div class="t" style="left:1023px;top:767px;line-height:16px;height:16px;font-size:12px;color:#000;width:55px;text-align:right;"><span class="d">3</span></div>
<div class="t" style="left:1083px;top:767px;line-height:16px;height:16px;font-size:12px;color:#000;width:55px;text-align:right;"><span class="d">0</span></div>
<div class="t" style="left:1143px;top:767px;line-height:16px;height:16px;font-size:12px;color:#000;width:55px;text-align:right;"><span class="d">3</span></div>
<div class="t" style="left:1203px;top:767px;line-height:16px;height:16px;font-size:12px;color:#000;width:55px;text-align:right;"><span class="d">0</span></div>
<div class="t" style="left:1323px;top:767px;line-height:16px;height:16px;font-size:12px;color:#000;width:55px;text-align:right;"><span class="d">0</span></div>
<div class="t" style="left:1383px;top:767px;line-height:16px;height:16px;font-size:12px;color:#000;width:55px;text-align:right;"><span class="d">0</span></div>
<div class="t" style="left:1443px;top:767px;line-height:16px;height:16px;font-size:12px;color:#000;width:63px;text-align:right;"><span class="d">0</span></div>
<div style="left:339px;top:803px;width:1524px;height:1px;background:#a8a8a8"></div>
<div style="left:339px;top:804px;width:1524px;height:1px;background:#585858"></div>
<div style="left:296px;top:465px;width:328px;height:31px;border:1px solid #fb3838"></div>
<svg class="a" style="left:290px;top:500px" width="72" height="90" viewBox="290 500 72 90"><path d="M296.3 584.2 L307.9 567 L329.7 537 L342.5 518.8 L338.9 514 L353.9 506.1 L350.7 523.5 L348.8 521.8 L338.3 537 L314 567 Z" fill="#f8383a"/></svg>
<div style="left:354px;top:559px;width:20px;height:20px;border-radius:50%;background:#f5222d"></div>
<div class="t" style="left:354px;top:561px;line-height:16px;height:16px;font-size:13px;color:#fff;width:20px;text-align:center;font-family:'Liberation Sans',sans-serif;">1</div>
<div style="left:383px;top:552px;width:242px;height:56px;border-radius:4px;background:rgba(52,52,52,.82)"></div>
<svg class="a" style="left:378px;top:563px" width="6" height="12" viewBox="0 0 6 12"><path d="M6 0L0 6l6 6z" fill="rgba(52,52,52,.82)"/></svg>
<div class="t" style="left:389px;top:559px;line-height:22px;font-size:16px;color:#fff;font-family:'Liberation Sans','Noto Sans CJK SC',sans-serif">建议作为单据引用中的通用功能<br>过滤明细中的物料的补货方式</div>
</body></html>
